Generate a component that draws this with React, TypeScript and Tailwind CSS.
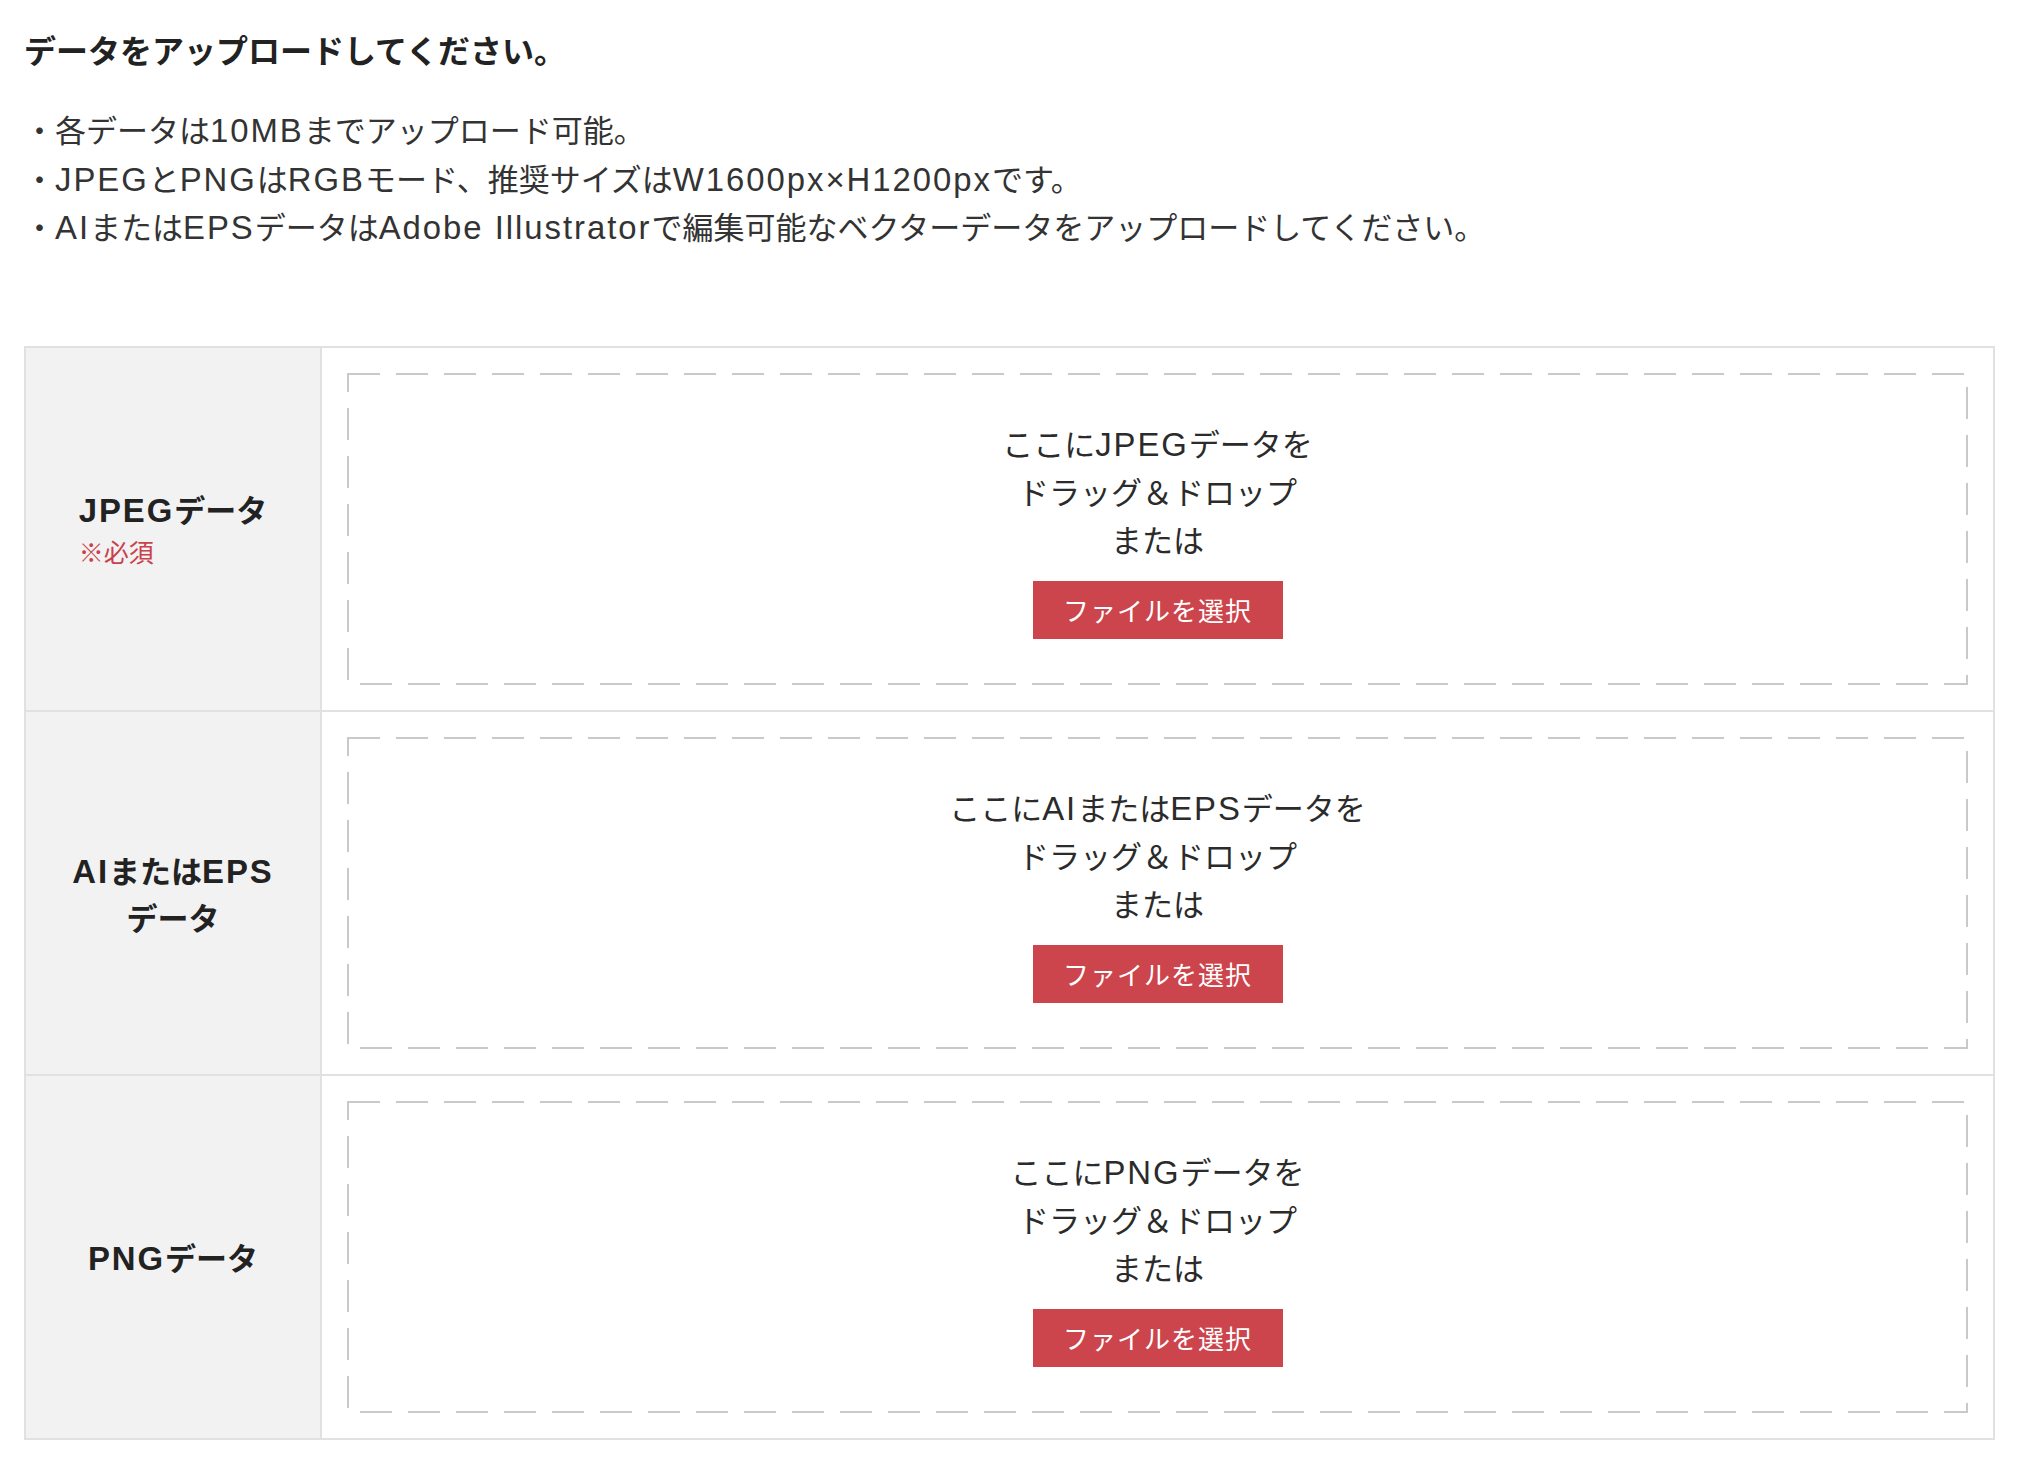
import React from "react";

// upload form: notes + three drop zones

const font = "font-['Noto_Sans_CJK_JP','Noto_Sans',sans-serif]";

// latin runs get a wider face so widths line up with the original
const Txt: React.FC<{ children: string }> = ({ children }) => (
  <>
    {children.split(/([A-Za-z0-9×][A-Za-z0-9× ]*)/).map((part, i) =>
      /^[A-Za-z0-9×]/.test(part) ? (
        <span key={i} className="font-['Liberation_Sans',sans-serif] text-[1.06em] leading-none tracking-[0.06em]">
          {part}
        </span>
      ) : (
        part
      )
    )}
  </>
);

const DashedFrame: React.FC = () => (
  <svg className="absolute inset-0 w-full h-full pointer-events-none overflow-visible" aria-hidden>
    <rect
      x="1"
      y="1"
      className="w-[calc(100%-2px)] h-[calc(100%-2px)]"
      fill="none"
      stroke="#c9c9c9"
      strokeWidth="2"
      strokeDasharray="32 16"
    />
  </svg>
);

const DropZone: React.FC<{ text: string }> = ({ text }) => (
  <div className="relative h-[312px] flex flex-col items-center justify-center text-center text-[31px] leading-[48px] text-[#2b2b2b]">
    <DashedFrame />
    <p><Txt>{text}</Txt></p>
    <p>ドラッグ＆ドロップ</p>
    <p>または</p>
    <button
      type="button"
      className="mt-[18px] w-[250px] h-[58px] bg-[#cc444c] text-white text-[26px] leading-none tracking-[1px] flex items-center justify-center"
    >
      ファイルを選択
    </button>
  </div>
);

interface UploadRow {
  key: string;
  label: React.ReactNode;
  dropText: string;
}

const rows: UploadRow[] = [
  {
    key: "jpeg",
    label: (
      <div className="text-left">
        <div className="text-[31px] leading-[44px] font-bold text-[#222]"><Txt>JPEGデータ</Txt></div>
        <div className="text-[25px] leading-[40px] text-[#c9414b]">※必須</div>
      </div>
    ),
    dropText: "ここにJPEGデータを",
  },
  {
    key: "ai",
    label: (
      <div className="text-[31px] leading-[47px] font-bold text-[#222] text-center">
        <Txt>AIまたはEPS</Txt>
        <br />
        データ
      </div>
    ),
    dropText: "ここにAIまたはEPSデータを",
  },
  {
    key: "png",
    label: <div className="text-[31px] leading-[47px] font-bold text-[#222] text-center"><Txt>PNGデータ</Txt></div>,
    dropText: "ここにPNGデータを",
  },
];

export default function App() {
  return (
    <div className={`w-[2022px] min-h-[1466px] bg-white px-[24px] pt-[25px] ${font}`}>
      <h1 className="text-[32px] leading-[48px] font-bold text-[#222]">データをアップロードしてください。</h1>

      <ul className="mt-[32px] text-[31px] leading-[48.5px] text-[#333]">
        <li><Txt>・各データは10MBまでアップロード可能。</Txt></li>
        <li><Txt>・JPEGとPNGはRGBモード、推奨サイズはW1600px×H1200pxです。</Txt></li>
        <li><Txt>・AIまたはEPSデータはAdobe Illustratorで編集可能なベクターデータをアップロードしてください。</Txt></li>
      </ul>

      <div className="mt-[95px] w-[1971px] border-2 border-[#e1e1e4]">
        {rows.map((row, idx) => (
          <div
            key={row.key}
            className={`flex ${idx < rows.length - 1 ? "border-b-2 border-[#e1e1e4]" : ""}`}
          >
            <div className="w-[296px] shrink-0 bg-[#f2f2f3] border-r-2 border-[#e1e1e4] flex items-center justify-center px-[40px]">
              {row.label}
            </div>
            <div className="flex-1 p-[25px]">
              <DropZone text={row.dropText} />
            </div>
          </div>
        ))}
      </div>
    </div>
  );
}
